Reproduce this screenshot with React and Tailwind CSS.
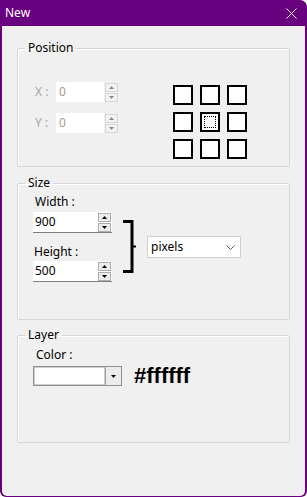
import React from "react";

function Spin({ disabled }) {
  const b = disabled
    ? "border-[#d6d6d6] bg-[#f2f2f2]"
    : "border-[#adadad] bg-[#ececec]";
  const t = disabled ? "#8c8c8c" : "#000000";
  return (
    <div className="flex w-[13px] flex-col gap-[1px]">
      <div className={`flex h-[9px] items-center justify-center border ${b}`}>
        <svg width="5" height="3" viewBox="0 0 5 3">
          <path d="M0 3 L2.5 0 L5 3Z" fill={t} />
        </svg>
      </div>
      <div className={`flex h-[9px] items-center justify-center border ${b}`}>
        <svg width="5" height="3" viewBox="0 0 5 3">
          <path d="M0 0 L2.5 3 L5 0Z" fill={t} />
        </svg>
      </div>
    </div>
  );
}

function PosRow({ label, value }) {
  return (
    <div className="flex h-[20px] items-center">
      <span className="w-[21px] text-[12px] leading-[16px] text-[#a6a6a6]">{label}</span>
      <div className="flex h-[20px] w-[48px] items-center bg-white pl-[3px] text-[12px] text-[#a89a86]">
        {value}
      </div>
      <div className="ml-[1px]">
        <Spin disabled />
      </div>
    </div>
  );
}

function SizeInput({ value }) {
  return (
    <div className="flex h-[21px] w-[79px] items-center border-b border-[#7f7f7f] bg-white pl-[2px] pr-[1px]">
      <span className="flex-1 text-[12px] leading-[16px] text-black">{value}</span>
      <Spin />
    </div>
  );
}

function Square({ focus }) {
  return (
    <div className="relative h-[20px] w-[20px] border-2 border-black bg-white">
      {focus && (
        <div className="absolute inset-[2px] border border-dotted border-black" />
      )}
    </div>
  );
}

export default function App() {
  const font = "font-['Noto_Sans','Open_Sans',sans-serif]";
  return (
    <div className={`${font} h-[497px] w-[307px] bg-white`}>
      <div className="flex h-[497px] w-[307px] flex-col rounded-tr-[7px] rounded-b-[6px] bg-[#690080] px-[2px] pb-[1px]">
        <div className="flex h-[26px] shrink-0 items-center justify-between pl-[3px] pr-[8px]">
          <span className="text-[12px] leading-[16px] text-white">New</span>
          <svg width="11" height="11" viewBox="0 0 11 11">
            <path d="M0.5 0.5 L10.5 10.5 M10.5 0.5 L0.5 10.5" stroke="#ffffff" strokeWidth="1" />
          </svg>
        </div>
        <div className="flex flex-1 flex-col rounded-b-[5px] bg-[#f0f0f0] px-[15px] pt-[14px] text-[12px] text-black">
          {/* Position */}
          <fieldset className="h-[127px] rounded-[2px] border border-[#d7d7d7] shadow-[inset_1px_1px_0_#ffffff]">
            <legend className="ml-[7px] px-[3px] text-[12px] leading-[16px]">Position</legend>
            <div className="flex items-start pl-[17px] pt-[26px]">
              <div className="flex flex-col gap-[11px]">
                <PosRow label="X :" value="0" />
                <PosRow label="Y :" value="0" />
              </div>
              <div className="ml-[55px] mt-[3px] grid grid-cols-3 gap-[7px]">
                <Square />
                <Square />
                <Square />
                <Square />
                <Square focus />
                <Square />
                <Square />
                <Square />
                <Square />
              </div>
            </div>
          </fieldset>

          {/* Size */}
          <fieldset className="mt-[8px] h-[145px] rounded-[2px] border border-[#d7d7d7] shadow-[inset_1px_1px_0_#ffffff]">
            <legend className="ml-[7px] px-[3px] text-[12px] leading-[16px]">Size</legend>
            <div className="flex items-start pl-[15px] pt-[3px]">
              <div className="flex flex-col">
                <span className="pl-[2px] text-[12px] leading-[16px]">Width :</span>
                <div className="mt-[2px]">
                  <SizeInput value="900" />
                </div>
                <span className="mt-[11px] pl-[1px] text-[12px] leading-[16px]">Height :</span>
                <div className="mt-[1px]">
                  <SizeInput value="500" />
                </div>
              </div>
              <svg className="ml-[11px] mt-[26px]" width="14" height="53" viewBox="0 0 14 53">
                <path d="M0 1.5 H9 V51.5 H0" fill="none" stroke="#000" strokeWidth="3" />
                <path d="M10 26.5 H13" stroke="#000" strokeWidth="2" />
              </svg>
              <div className="ml-[10px] mt-[42px] flex h-[22px] w-[94px] items-center justify-between border border-[#cfcfcf] bg-white pl-[3px] pr-[5px]">
                <span className="text-[12px] leading-[16px]">pixels</span>
                <svg width="9" height="5" viewBox="0 0 9 5">
                  <path d="M0.5 0.5 L4.5 4.5 L8.5 0.5" fill="none" stroke="#606060" strokeWidth="1" />
                </svg>
              </div>
            </div>
          </fieldset>

          {/* Layer */}
          <fieldset className="mt-[7px] h-[116px] rounded-[2px] border border-[#d7d7d7] shadow-[inset_1px_1px_0_#ffffff]">
            <legend className="ml-[7px] px-[3px] text-[12px] leading-[16px]">Layer</legend>
            <div className="flex flex-col pl-[15px] pt-[4px]">
              <span className="pl-[3px] text-[12px] leading-[16px]">Color :</span>
              <div className="mt-[2px] flex items-center">
                <div className="flex h-[20px] w-[89px] border border-[#8f8f8f] bg-[#e6e6e6]">
                  <div className="flex-1 border border-[#cdcdcd] bg-white" />
                  <div className="flex w-[16px] items-center justify-center border-l border-[#a0a0a0] bg-[#ececec]">
                    <svg width="5" height="3" viewBox="0 0 5 3">
                      <path d="M0 0 L2.5 3 L5 0Z" fill="#000" />
                    </svg>
                  </div>
                </div>
                <span className="ml-[12px] font-['Liberation_Sans',Arial,sans-serif] text-[22px] font-bold leading-[22px] text-black">
                  #ffffff
                </span>
              </div>
            </div>
          </fieldset>
        </div>
      </div>
    </div>
  );
}
